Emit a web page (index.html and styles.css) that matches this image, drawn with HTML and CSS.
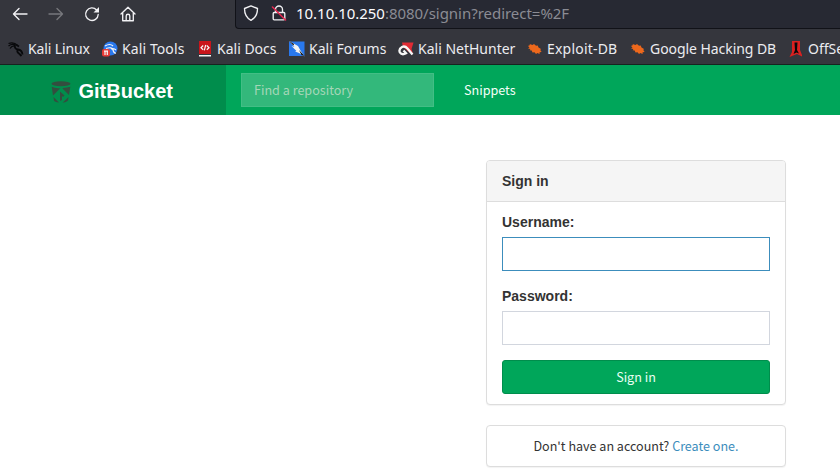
FILE: index.html
```
<!DOCTYPE html>
<html lang="en">
<head>
<meta charset="utf-8">
<title>GitBucket - Sign in</title>
<link rel="stylesheet" href="styles.css">
</head>
<body>
<div class="toolbar">
  <div class="nav-icons">
    <svg class="ico" viewBox="0 0 16 16"><path d="M15 8H1.500M7 2.500 1.500 8 7 13.500"/></svg>
    <svg class="ico dim" viewBox="0 0 16 16"><path d="M1 8h13.500M9 2.500 14.500 8 9 13.500"/></svg>
    <svg class="ico" viewBox="0 0 16 16"><path d="M14.200 8.500A6.300 6.300 0 1 1 12.600 4"/><path class="solid" d="M15 1v5.500H9.500z"/></svg>
    <svg class="ico" viewBox="0 0 16 16"><path d="M1 8 8 1.200 15 8M2.700 7v7.700h10.600V7M6.200 14.500V10a1.800 1.800 0 0 1 3.600 0v4.500"/></svg>
  </div>
  <div class="address">
    <svg class="ico" viewBox="0 0 16 16"><path d="M8 .9 14.500 3.500C14.500 9 12.500 13 8 15.300 3.500 13 1.500 9 1.500 3.500z"/></svg>
    <svg class="ico lock" viewBox="0 0 16 16"><path d="M3.200 7.500h9.600q1 0 1 1v5.300q0 1-1 1H3.200q-1 0-1-1V8.500q0-1 1-1M4.500 7.300V4.500a3.500 3.500 0 0 1 7 0v2.800"/><path class="cut" d="M1.500 2 14.500 15"/></svg>
    <div class="url"><span class="host">10.10.10.250</span>:8080/signin?redirect=%2F</div>
  </div>
</div>
<div class="bookmarks">
  <div class="bm linux"><svg viewBox="0 0 16 16"><path class="claw" d="M.5 2.500Q6 .5 9.500 4.500M.5 5Q4 2.500 7 4M2 7.500Q4 4.500 7 5"/><path class="tail" d="M7 3.500Q6 8 10 8.500T14.500 13.500M8.500 4 11 5.500M9.500 9Q8.500 11 11.500 13L13.500 15"/></svg><span>Kali Linux</span></div>
  <div class="bm tools"><svg viewBox="0 0 16 16"><circle class="blue" cx="8.500" cy="7.500" r="7"/><path class="wl" d="M3 5q5-3 8 0M4 7.500q6-2 7 1.500t3 3M9 8q3-1 5 1"/><rect class="red" y="8" width="8" height="7.500" rx="2"/><path class="wl" d="M2 10.200h4M3 10v4M5.300 10v4"/></svg><span>Kali Tools</span></div>
  <div class="bm"><svg viewBox="0 0 16 16"><path class="docs" d="M2 0h12v13H2z"/><path class="white" d="M2 14h12v1.500H2z"/><path class="wl" d="M6.200 4.500 4 6.800l2.200 2M9.800 4.500 12 6.800l-2.200 2M8.700 4 7.300 9.300"/></svg><span>Kali Docs</span></div>
  <div class="bm"><svg viewBox="0 0 16 16"><path class="blue" d="M0 .5h15.500V15H0z"/><path class="white" d="M0 0 9 5l2.500 4.500 4 6L10 12l-4-1.500 1.500-.5-5-5 3 1z"/><path class="black" d="M0 0 5 3 4.500 4.500zM10 9l5.500 6-3-1z"/></svg><span>Kali Forums</span></div>
  <div class="bm hunter"><svg viewBox="0 0 16 16"><path class="nhred" d="M4 1.500h11.500L13.500 8l1.500 5-4-2-6-5z"/><path class="arc" d="M14.500 13.500 9.500 7.500Q7 4.500 4 6 .5 8 1.800 11.300 4 14.500 8 12.300L5.500 9.500"/></svg><span>Kali NetHunter</span></div>
  <div class="bm exploit"><svg viewBox="0 0 16 16"><path class="orange" d="m1 5 2-1-.5-1 3 1L7 3l2 1.800 1.700-.3.800 2 2.500 1.500-.7 1 1.300 2-2 .2v1.700l-2.300-.9-1.300 1-1.500-1.800-2 .2-.8-1.900-2-.2.700-1.300L1 7.500l1.500-1z"/></svg><span>Exploit-DB</span></div>
  <div class="bm google"><svg viewBox="0 0 16 16"><path class="orange" d="m1 5 2-1-.5-1 3 1L7 3l2 1.800 1.700-.3.800 2 2.500 1.500-.7 1 1.300 2-2 .2v1.700l-2.300-.9-1.300 1-1.500-1.800-2 .2-.8-1.900-2-.2.700-1.300L1 7.500l1.500-1z"/></svg><span>Google Hacking DB</span></div>
  <div class="bm offs"><svg viewBox="0 0 16 16"><path class="offsec" d="M3 0h8v9l2 5v1.500L8 13l-7.500 3L3 11z"/><path class="black" d="M5.500 1.500h3L8 9l2 3.500-2.500-1-3 1.500L6 9z"/></svg><span>OffSec</span></div>
</div>
<header class="header">
  <div class="brand">
    <svg class="bucket" viewBox="0 0 20 22"><ellipse cx="10" cy="2.800" rx="9.500" ry="2.500"/><path d="M.7 5.800Q5 7.700 9.500 7L2 14.500ZM12 6.900Q16 6.800 19.300 5.800L18 14 11.500 7.500ZM9 10.500 13.500 14.500 12 16 11 15v4l-2 1zM2.500 16l5.500 5.500Q3.500 21 3 19.500ZM17.500 16 17 19.500Q15.500 21.500 11.500 21.800Z"/></svg>
    <span>GitBucket</span>
  </div>
  <div class="search">Find a repository</div>
  <div class="menu">Snippets</div>
</header>
<main class="content">
  <section class="panel">
    <div class="heading">Sign in</div>
    <div class="form">
      <label for="user">Username:</label>
      <input id="user" class="field active" type="text">
      <label for="pass">Password:</label>
      <input id="pass" class="field" type="password">
      <button class="submit" type="button">Sign in</button>
    </div>
  </section>
  <section class="panel signup"><span>Don't have an account? <a>Create one.</a></span></section>
</main>
</body>
</html>
```
FILE: styles.css
```
* { box-sizing: border-box; }
body { margin: 0; width: 840px; height: 476px; overflow: hidden; background: #fff; color: #333; font-family: "Noto Sans CJK SC", "Noto Sans", sans-serif; }
svg { display: block; flex: none; }
.toolbar { height: 32px; display: flex; background: #35363d; }
.nav-icons { width: 235px; display: flex; gap: 20px; padding: 6px 0 0 12px; }
.ico { width: 16px; height: 16px; fill: none; stroke: #f1f1f4; stroke-width: 1.35; stroke-linecap: round; stroke-linejoin: round; }
.dim { stroke: #77787d; }
.ico .solid { fill: #f1f1f4; stroke: none; }
.ico .cut { stroke: #e22850; stroke-width: 1.6; }
.address { flex: 1; height: 29px; display: flex; padding: 5px 0 0 7px; gap: 12px; background: #272933; border: 1px solid #111218; border-top: 0; border-right: 0; border-radius: 0 0 0 4px; }
.url { margin-left: -3px; margin-top: -3px; font: 15px/22px "Noto Sans", sans-serif; letter-spacing: -.03px; color: #8b8c94; white-space: nowrap; }
.host { color: #fbfbfe; }
.bookmarks { height: 33px; padding: 1px 0 0 8px; display: grid; grid-template-columns: 94px 95px 92px 109px 129px 103px 159px 80px; background: #35363d; border-bottom: 1px solid #17221f; overflow: hidden; }
.bm { display: flex; align-items: center; gap: 4px; height: 31px; font: 14px/20px "Noto Sans", sans-serif; color: #ececf0; white-space: nowrap; }
.bm svg { width: 16px; height: 16px; }
.linux { letter-spacing: -.12px; }
.tools { letter-spacing: .1px; }
.exploit { letter-spacing: .2px; }
.google { letter-spacing: -.06px; }
.offs { gap: 3px; }
.black { fill: #08090b; }
.claw, .tail { fill: none; stroke: #08090b; stroke-width: 1.3; }
.tail { stroke-width: 1.8; }
.white { fill: #f3f3f3; }
.wl { fill: none; stroke: #f5f5f5; stroke-width: 1.2; }
.blue { fill: #2978ed; }
.red { fill: #e63b36; }
.docs { fill: #c9151b; }
.nhred { fill: #e02b34; }
.arc { fill: none; stroke: #f6f6f6; stroke-width: 2.3; }
.orange { fill: #ed681c; }
.offsec { fill: #da2020; }
.header { height: 50px; display: flex; align-items: center; background: #00a65a; }
.brand { width: 226px; height: 50px; display: flex; align-items: center; gap: 7.5px; padding-left: 51px; background: #008d4c; color: #fff; font: bold 20px/50px "Liberation Sans", sans-serif; }
.brand span { padding-top: 2px; }
.bucket { width: 20px; height: 22px; margin-top: 4px; fill: #334e3f; }
.search { width: 193px; height: 34px; margin-left: 15px; padding-left: 12px; background: #33b87b; border: 1px solid #42be85; color: #a5d6b8; font-size: 12.6px; line-height: 32px; }
.menu { margin-left: 30px; color: #f5fff9; font-size: 12.6px; line-height: 50px; }
.content { width: 300px; margin: 45px 0 0 486px; }
.panel { border: 1px solid #ddd; border-radius: 4px; box-shadow: 0 1px 1px rgba(0,0,0,.05); background: #fff; overflow: hidden; }
.heading { height: 41px; padding-left: 15px; background: #f5f5f5; border-bottom: 1px solid #ddd; font: bold 14px/40px "Liberation Sans", sans-serif; }
.form { padding: 10px 15px; }
label { display: block; margin-bottom: 5px; font: bold 14px/20px "Liberation Sans", sans-serif; }
.field { display: block; width: 100%; height: 34px; margin: 0 0 15px; border: 1px solid #d2d6de; border-radius: 0; background: #fff; outline: 0; }
.field.active { border-color: #3c8dbc; }
.submit { display: block; width: 100%; height: 34px; padding: 0; border: 1px solid #008d4c; border-radius: 3px; background: #00a65a; color: #e9fff4; font: 12.6px/32px "Noto Sans CJK SC", sans-serif; }
.signup { height: 42px; margin-top: 20px; text-align: center; font-size: 12.55px; line-height: 40px; }
a { color: #3c8dbc; }
```
